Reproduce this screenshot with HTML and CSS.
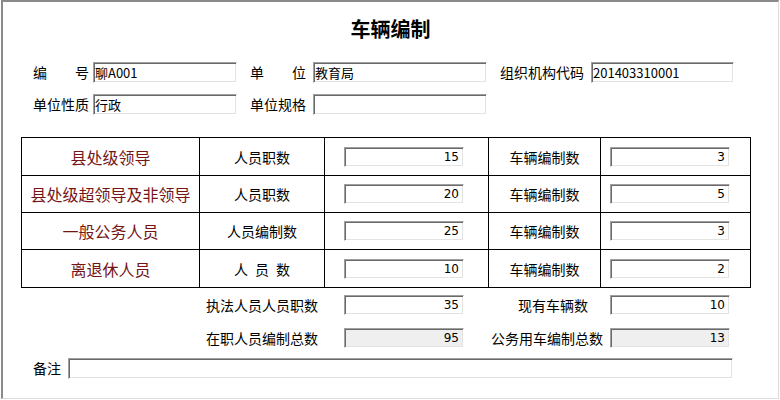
FILE: index.html
```html
<!DOCTYPE html>
<html lang="zh-CN">
<head>
<meta charset="utf-8">
<title>车辆编制</title>
<link rel="stylesheet" href="styles.css">
</head>
<body>
<div class="frame">
  <div class="title">车辆编制</div>

  <div class="head-row">
    <label class="lbl lbl-2"><span>编</span><span>号</span></label>
    <input class="txt w144" type="text" value="聊A001">
    <label class="lbl lbl-2 gap-l wide-r"><span>单</span><span>位</span></label>
    <input class="txt w174" type="text" value="教育局">
    <label class="lbl lbl-6 gap-l">组织机构代码</label>
    <input class="txt w143" type="text" value="201403310001">
  </div>
  <div class="head-row row2">
    <label class="lbl lbl-2">单位性质</label>
    <input class="txt w144" type="text" value="行政">
    <label class="lbl lbl-2 gap-l wide-r">单位规格</label>
    <input class="txt w174" type="text" value="">
  </div>

  <div class="grid">
    <div class="cell cat">县处级领导</div>
    <div class="cell">人员职数</div>
    <div class="cell in3"><input class="num" type="text" value="15"></div>
    <div class="cell">车辆编制数</div>
    <div class="cell in5"><input class="num" type="text" value="3"></div>

    <div class="cell cat">县处级超领导及非领导</div>
    <div class="cell">人员职数</div>
    <div class="cell in3"><input class="num" type="text" value="20"></div>
    <div class="cell">车辆编制数</div>
    <div class="cell in5"><input class="num" type="text" value="5"></div>

    <div class="cell cat">一般公务人员</div>
    <div class="cell">人员编制数</div>
    <div class="cell in3"><input class="num" type="text" value="25"></div>
    <div class="cell">车辆编制数</div>
    <div class="cell in5"><input class="num" type="text" value="3"></div>

    <div class="cell cat">离退休人员</div>
    <div class="cell">人&#8194;员&#8194;数</div>
    <div class="cell in3"><input class="num" type="text" value="10"></div>
    <div class="cell">车辆编制数</div>
    <div class="cell in5"><input class="num" type="text" value="2"></div>
  </div>

  <div class="sum">
    <div class="scell"></div>
    <div class="scell">执法人员人员职数</div>
    <div class="scell in3"><input class="num" type="text" value="35"></div>
    <div class="scell c4 c4a">现有车辆数</div>
    <div class="scell in5"><input class="num" type="text" value="10"></div>

    <div class="scell"></div>
    <div class="scell">在职人员编制总数</div>
    <div class="scell in3"><input class="num ro" type="text" value="95" readonly></div>
    <div class="scell c4 c4b">公务用车编制总数</div>
    <div class="scell in5"><input class="num ro" type="text" value="13" readonly></div>
  </div>

  <div class="note-row">
    <label class="lbl-note">备注</label>
    <input class="txt w664" type="text" value="">
  </div>
</div>
</body>
</html>
```

FILE: styles.css
```css
html, body {
  margin: 0;
  padding: 0;
  background: #ffffff;
}

body {
  font-family: "Noto Sans CJK SC", "DejaVu Sans", sans-serif;
  font-size: 14px;
  color: #000000;
}

.frame {
  margin-left: 1px;
  width: 778px;
  height: 399px;
  box-sizing: border-box;
  border-style: solid;
  border-width: 2px 1px 1px 2px;
  border-color: #8a8a8a #dcdcdc #dcdcdc #8a8a8a;
  overflow: hidden;
}

.title {
  padding-top: 15px;
  height: 24px;
  line-height: 24px;
  text-align: center;
  font-size: 20px;
  font-weight: bold;
}

.head-row {
  display: flex;
  align-items: center;
  margin-top: 21px;
  padding-left: 30px;
  height: 21px;
}

.head-row.row2 {
  margin-top: 11px;
}

.lbl {
  display: flex;
  justify-content: space-between;
  white-space: nowrap;
  line-height: 21px;
  margin-right: 4px;
}

.lbl-2 {
  width: 56px;
}

.lbl.wide-r {
  margin-right: 7px;
}

.lbl-6 {
  width: 84px;
  margin-right: 7px;
}

.gap-l {
  margin-left: 13px;
}

.txt {
  box-sizing: border-box;
  height: 21px;
  margin: 0;
  padding: 0 2px 0 1px;
  font-family: "Noto Sans CJK SC", "DejaVu Sans", sans-serif;
  font-size: 13px;
  color: #000;
  background: #fff;
  border: 1px solid;
  border-color: #a0a0a0 #ffffff #ffffff #a0a0a0;
  box-shadow: inset 1px 1px 0 #6a6a6a, inset -1px -1px 0 #e3e3e3;
  outline: none;
}

.w144 { width: 144px; }
.w174 { width: 174px; }
.w143 { width: 143px; }
.w664 { width: 665px; }

.grid {
  margin-top: 22px;
  margin-left: 18px;
  width: 730px;
  box-sizing: border-box;
  display: grid;
  grid-template-columns: 177px 124px 163px 111px 149px;
  grid-template-rows: 37px 36px 36px 37px;
  gap: 1px;
  padding: 1px;
  background: #000000;
}

.cell {
  background: #ffffff;
  display: flex;
  align-items: center;
  justify-content: center;
  white-space: nowrap;
  font-size: 14px;
}

.cell.cat {
  color: #761515;
  font-size: 16px;
}

.in3 {
  justify-content: flex-start;
  padding-left: 19px;
}

.in5 {
  justify-content: flex-start;
  padding-left: 9px;
}

.num {
  box-sizing: border-box;
  width: 120px;
  height: 20px;
  margin: 0;
  padding: 0 4px 0 2px;
  text-align: right;
  font-family: "DejaVu Sans", "Liberation Sans", sans-serif;
  font-size: 12px;
  color: #000;
  background: #fff;
  border: 1px solid;
  border-color: #a0a0a0 #ffffff #ffffff #a0a0a0;
  box-shadow: inset 1px 1px 0 #6a6a6a, inset -1px -1px 0 #e3e3e3;
  outline: none;
}

.num.ro {
  background: #efefef;
}

.sum {
  margin-left: 18px;
  width: 730px;
  box-sizing: border-box;
  display: grid;
  grid-template-columns: 177px 124px 163px 111px 149px;
  grid-template-rows: 33px 33px;
  column-gap: 1px;
  padding: 0 1px;
}

.scell {
  display: flex;
  align-items: center;
  justify-content: center;
  white-space: nowrap;
  font-size: 14px;
}

.scell.in3 {
  justify-content: flex-start;
  padding-left: 19px;
}

.scell.in5 {
  justify-content: flex-start;
  padding-left: 9px;
}

.c4a {
  padding-left: 17px;
}

.c4b {
  padding-left: 5px;
}

.note-row {
  display: flex;
  align-items: center;
  margin-top: 4px;
  padding-left: 30px;
  height: 21px;
}

.lbl-note {
  width: 35px;
  line-height: 21px;
  white-space: nowrap;
}
```
